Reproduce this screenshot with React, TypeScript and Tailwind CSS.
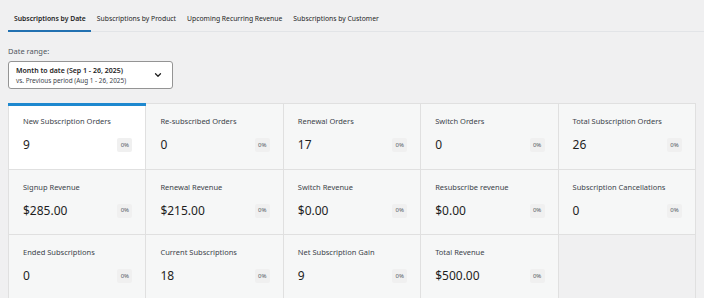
import React from 'react';

const TABS = [
  'Subscriptions by Date',
  'Subscriptions by Product',
  'Upcoming Recurring Revenue',
  'Subscriptions by Customer',
];

const STATS = [
  { label: 'New Subscription Orders', value: '9', active: true },
  { label: 'Re-subscribed Orders', value: '0' },
  { label: 'Renewal Orders', value: '17' },
  { label: 'Switch Orders', value: '0' },
  { label: 'Total Subscription Orders', value: '26' },
  { label: 'Signup Revenue', value: '$285.00' },
  { label: 'Renewal Revenue', value: '$215.00' },
  { label: 'Switch Revenue', value: '$0.00' },
  { label: 'Resubscribe revenue', value: '$0.00' },
  { label: 'Subscription Cancellations', value: '0' },
  { label: 'Ended Subscriptions', value: '0' },
  { label: 'Current Subscriptions', value: '18' },
  { label: 'Net Subscription Gain', value: '9' },
  { label: 'Total Revenue', value: '$500.00' },
];

export default function App() {
  return (
    <div className="min-h-[298px] w-[704px] bg-[#f0f0f1] px-2 pt-3 font-['Noto_Sans',_'Open_Sans',_sans-serif] text-[#1e1e1e] overflow-hidden">
      {/* Tabs */}
      <div className="flex border-b border-[#e2e4e7] mr-[-8px]">
        {TABS.map((tab, i) => (
          <div
            key={tab}
            className={`px-[5.5px] pb-[5px] text-[6.8px] leading-[13px] whitespace-nowrap ${
              i === 0 ? 'pl-[6px] font-semibold border-b-2 border-[#2271b1] -mb-px' : 'text-[#1e1e1e]'
            }`}
          >
            {tab}
          </div>
        ))}
      </div>

      {/* Date range */}
      <div className="mt-[14px] text-[7.5px] text-[#50575e] leading-[10px]">Date range:</div>
      <div className="mt-[5px] w-[165px] h-[28px] bg-white border border-[#949494] rounded-[3px] flex items-center justify-between pl-[7px] pr-[9px]">
        <div className="flex flex-col">
          <span className="text-[7px] font-semibold leading-[10px] text-[#1e1e1e]">Month to date (Sep 1 - 26, 2025)</span>
          <span className="text-[6.4px] leading-[9px] text-[#3c434a]">vs. Previous period (Aug 1 - 26, 2025)</span>
        </div>
        <svg width="10" height="10" viewBox="0 0 24 24" fill="none" stroke="#1e1e1e" strokeWidth="3" strokeLinecap="round" strokeLinejoin="round">
          <path d="M6 9l6 6 6-6" />
        </svg>
      </div>

      {/* Stats grid */}
      <div className="mt-[14px] w-[688px] grid grid-cols-5 border-t border-l border-[#e0e0e0]">
        {STATS.map((s) => (
          <div
            key={s.label}
            className={`relative h-[65.5px] border-r border-b border-[#e0e0e0] pl-[14px] pr-[13px] pt-[12px] ${
              s.active ? 'bg-white' : 'bg-[#f6f7f7]'
            }`}
          >
            {s.active && <div className="absolute left-[-1px] right-[-1px] top-[-1px] h-[3px] bg-[#1e88cf]" />}
            <div className="text-[7.5px] leading-[10px] text-[#3c434a] whitespace-nowrap">{s.label}</div>
            <div className="mt-[11px] flex items-center justify-between">
              <span className="text-[12px] leading-[16px] text-[#1e1e1e]">{s.value}</span>
              <span className="w-[15px] h-[14px] bg-[#f0f0f0] rounded-[2px] flex items-center justify-center text-[6px] text-[#50575e]">0%</span>
            </div>
          </div>
        ))}
        <div className="h-[65.5px] bg-[#f0f0f1] border-r border-b border-[#e0e0e0]" />
      </div>
    </div>
  );
}
